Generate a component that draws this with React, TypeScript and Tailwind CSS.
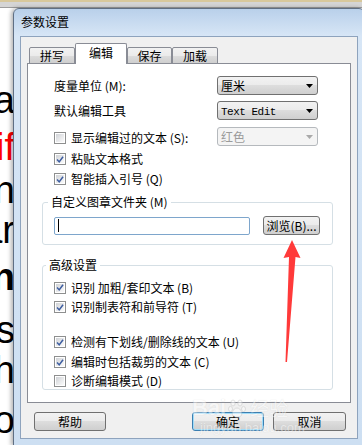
import React from "react";

const docLines = [
  { t: "a", cls: "h-[47px] text-black" },
  { t: "if", cls: "h-[43px] text-[#ff0000]" },
  { t: "n", cls: "h-[40px] text-black" },
  { t: "ar", cls: "h-[47px] text-black" },
  { t: "n", cls: "h-[53px] text-black font-bold" },
  { t: "s", cls: "h-[40px] text-black" },
  { t: "h", cls: "h-[50px] text-black" },
  { t: "o", cls: "h-[50px] text-black" },
];

function Checkbox({ checked }: { checked?: boolean }) {
  return (
    <span className="flex h-[12px] w-[12px] shrink-0 border border-[#8e8f8f] bg-white p-px">
      <span className="flex h-full w-full items-center justify-center bg-[linear-gradient(135deg,#cfd2d6_0%,#e6e7e9_50%,#fbfbfb_100%)]">
        {checked && (
          <svg width="9" height="9" viewBox="0 0 9 9">
            <path d="M1.2 4.6 L3.6 7.2 L7.9 1.4" fill="none" stroke="#3d5da0" strokeWidth="1.7" />
          </svg>
        )}
      </span>
    </span>
  );
}

function CheckRow({ checked, label, h }: { checked?: boolean; label: string; h: string }) {
  return (
    <div className={`flex items-center gap-[5px] ${h}`}>
      <Checkbox checked={checked} />
      <span className="whitespace-nowrap text-[12px] leading-[14px]">{label}</span>
    </div>
  );
}

function Arrow({ color }: { color: string }) {
  return (
    <svg width="7" height="4" viewBox="0 0 7 4" className="shrink-0">
      <polygon points="0,0 7,0 3.5,4" fill={color} />
    </svg>
  );
}

function Select({ children, disabled }: { children: React.ReactNode; disabled?: boolean }) {
  if (disabled) {
    return (
      <div className="flex h-[19px] w-[101px] items-center justify-between rounded-[3px] border border-[#b5b9bd] bg-[#f4f4f4] pl-[3px] pr-[4px] text-[12px] leading-[14px] text-[#9b9b9b]">
        <span>{children}</span>
        <Arrow color="#a9a9a9" />
      </div>
    );
  }
  return (
    <div className="flex h-[19px] w-[101px] items-center justify-between rounded-[3px] border border-[#707070] bg-[linear-gradient(to_bottom,#f2f2f2_0%,#ebebeb_50%,#dddddd_50%,#cfcfcf_100%)] pl-[3px] pr-[4px] text-[12px] leading-[14px] text-black">
      <span className="whitespace-nowrap">{children}</span>
      <Arrow color="#000000" />
    </div>
  );
}

function Button({ children, w, primary }: { children: React.ReactNode; w: string; primary?: boolean }) {
  return (
    <div
      className={`flex h-[19px] items-center justify-center rounded-[3px] border text-[12px] leading-[14px] text-black ${w} ${
        primary
          ? "border-[#3c7fb1] bg-[linear-gradient(to_bottom,#f2f2f2_0%,#ebebeb_50%,#dddddd_50%,#cfcfcf_100%)] shadow-[inset_0_0_0_1px_#9fdcf8]"
          : "border-[#707070] bg-[linear-gradient(to_bottom,#f2f2f2_0%,#ebebeb_50%,#dddddd_50%,#cfcfcf_100%)]"
      }`}
    >
      {children}
    </div>
  );
}

function Tab({ label, selected, w }: { label: string; selected?: boolean; w: string }) {
  if (selected) {
    return (
      <div className={`flex h-[21px] items-start justify-center rounded-t-[2px] border border-b-0 border-[#898c95] bg-white pt-[2px] text-[12px] leading-[14px] ${w}`}>
        {label}
      </div>
    );
  }
  return (
    <div className={`flex h-[17px] items-center justify-center rounded-t-[2px] border border-[#898c95] bg-[linear-gradient(to_bottom,#f2f2f2_0%,#ebebeb_50%,#dddddd_50%,#cfcfcf_100%)] pt-px text-[12px] leading-[14px] ${w}`}>
      {label}
    </div>
  );
}

function Dialog() {
  return (
    <div className="absolute left-[13px] top-[8px] flex h-[438px] w-[352px] flex-col rounded-t-[6px] border border-[#5f6f84] bg-[linear-gradient(to_bottom,#b9d0ea_0px,#d7e6f6_27px,#cddff2_100%)] px-[6px] pb-[6px] shadow-[-2px_0_4px_rgba(0,0,0,0.3)]">
      <div className="flex h-[27px] items-center pl-px pb-px text-[12px] leading-[14px] text-black">参数设置</div>
      <div className="flex flex-1 flex-col border border-[#8ea3bd] bg-[#f0f0f0] px-[6px] pt-[6px] pb-[7px]">
        <div className="relative z-10 -mb-px flex items-end pl-[2px]">
          <Tab label="拼写" w="w-[46px]" />
          <Tab label="编辑" w="w-[52px]" selected />
          <Tab label="保存" w="w-[45px]" />
          <Tab label="加载" w="w-[46px]" />
        </div>
        <div className="flex h-[340px] flex-col border border-[#898c95] bg-white pl-[14px] pr-[17px] pt-[12px]">
          <div className="flex flex-col pl-[12px]">
            <div className="flex h-[19px] items-center">
              <span className="w-[163px] text-[12px] leading-[14px]">度量单位 (M):</span>
              <Select>厘米</Select>
            </div>
            <div className="mt-[6px] flex h-[19px] items-center">
              <span className="w-[163px] text-[12px] leading-[14px]">默认编辑工具</span>
              <Select>
                <span className="font-['Liberation_Mono',monospace] text-[11px] tracking-[-0.5px]">Text Edit</span>
              </Select>
            </div>
            <div className="mt-[7px] flex h-[19px] items-center">
              <div className="w-[163px] pt-[3px]">
                <CheckRow label="显示编辑过的文本 (S):" h="h-[14px]" />
              </div>
              <Select disabled>红色</Select>
            </div>
            <div className="mt-[3px]">
              <CheckRow checked label="粘贴文本格式" h="h-[20px]" />
              <CheckRow checked label="智能插入引号 (Q)" h="h-[20px]" />
            </div>
          </div>

          <fieldset className="mt-[6px] rounded-[3px] border border-[#d5dfe5] pb-[9px] pl-[11px] pr-[12px] pt-[7px]">
            <legend className="-ml-[6px] px-[3px] text-[12px] leading-[14px]">自定义图章文件夹 (M)</legend>
            <div className="flex h-[19px] items-center">
              <div className="flex h-[18px] w-[196px] items-center rounded-[2px] border border-[#7ea6cc] bg-white pl-[3px]">
                <span className="h-[13px] w-px bg-black" />
              </div>
              <div className="ml-[13px]">
                <Button w="w-[57px]">浏览(B)...</Button>
              </div>
            </div>
          </fieldset>

          <fieldset className="mt-[13px] rounded-[3px] border border-[#d5dfe5] pl-[11px] pr-[12px] pt-[6px]">
            <legend className="-ml-[8px] px-[3px] text-[12px] leading-[14px]">高级设置</legend>
            <CheckRow checked label="识别 加粗/套印文本 (B)" h="h-[19px]" />
            <CheckRow checked label="识别制表符和前导符 (T)" h="h-[20px]" />
            <div className="h-[15px]" />
            <CheckRow checked label="检测有下划线/删除线的文本 (U)" h="h-[20px]" />
            <CheckRow checked label="编辑时包括裁剪的文本 (C)" h="h-[20px]" />
            <CheckRow label="诊断编辑模式 (D)" h="h-[17px]" />
          </fieldset>
        </div>
        <div className="mt-[9px] flex items-center justify-between pl-[7px] pr-[5px]">
          <Button w="w-[72px]">帮助</Button>
          <div className="flex gap-[9px]">
            <Button w="w-[72px]" primary>
              确定
            </Button>
            <Button w="w-[73px]">取消</Button>
          </div>
        </div>
      </div>
    </div>
  );
}

function RedArrow() {
  return (
    <svg className="pointer-events-none absolute left-0 top-0" width="362" height="445" viewBox="0 0 362 445">
      <polygon
        points="292,240 300.5,258 295.5,257 287,362 285.5,362 289,257 283.5,258"
        fill="#ff3a3a"
      />
    </svg>
  );
}

function Watermark() {
  return (
    <div className="pointer-events-none absolute left-[192px] top-[396px] flex flex-col items-start text-white opacity-45 [text-shadow:0_0_1px_#b5b5b5]">
      <div className="flex items-end gap-[2px]">
        <span className="font-['Liberation_Sans',sans-serif] text-[22px] font-bold leading-[24px]">Bai</span>
        <svg width="18" height="20" viewBox="0 0 18 20" className="mb-[2px]">
          <g fill="#ffffff" stroke="#c4c4c4" strokeWidth="1">
            <ellipse cx="5" cy="5" rx="2.2" ry="3" />
            <ellipse cx="12" cy="5" rx="2.2" ry="3" />
            <ellipse cx="2.5" cy="11" rx="2" ry="2.6" />
            <ellipse cx="15.5" cy="11" rx="2" ry="2.6" />
            <path d="M9 10 C5 10 3 16 5 18 C7 19.5 11 19.5 13 18 C15 16 13 10 9 10 Z" />
          </g>
        </svg>
        <span className="ml-[2px] text-[19px] leading-[24px]">经验</span>
      </div>
      <span className="ml-[8px] font-['Liberation_Sans',sans-serif] text-[13px] leading-[15px]">jingyan.baidu.com</span>
    </div>
  );
}

export default function App() {
  return (
    <div className="relative h-[445px] w-[362px] overflow-hidden bg-white font-['Noto_Sans_CJK_SC',sans-serif] text-black">
      <div className="h-[2px] bg-[#d8c89c]" />
      <div className="h-[5px] bg-[#d5d5d5]" />
      <div className="h-px bg-[#9d9d9d]" />
      <div className="w-[15px] pt-[73px] font-['Liberation_Sans',sans-serif] text-[38px] leading-[38px]">
        {docLines.map((l, i) => (
          <div key={i} className={`flex justify-end whitespace-nowrap ${l.cls}`}>
            {l.t}
          </div>
        ))}
      </div>
      <Dialog />
      <RedArrow />
      <Watermark />
    </div>
  );
}
